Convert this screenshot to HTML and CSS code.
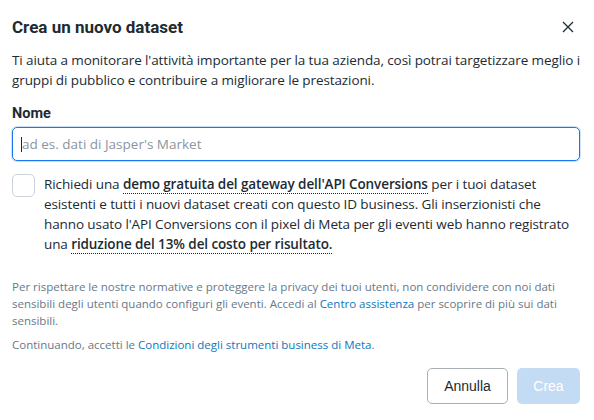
FILE: index.html
```html
<!DOCTYPE html>
<html lang="it">
<head>
<meta charset="utf-8">
<title>Crea un nuovo dataset</title>
<link rel="stylesheet" href="styles.css">
</head>
<body>
<div class="dialog">
  <div class="header">
    <h1 class="title">Crea un nuovo dataset</h1>
    <span class="close" aria-label="Chiudi">
      <svg width="12" height="12" viewBox="0 0 12 12"><path d="M1 1 L11 11 M11 1 L1 11" stroke="#1c2b33" stroke-width="1.3" fill="none"/></svg>
    </span>
  </div>
  <p class="desc">Ti aiuta a monitorare l'attività importante per la tua azienda, così potrai targetizzare meglio i<br>gruppi di pubblico e contribuire a migliorare le prestazioni.</p>
  <label class="label">Nome</label>
  <div class="input"><span class="caret"></span><span class="placeholder">ad es. dati di Jasper's Market</span></div>
  <div class="check-row">
    <span class="checkbox"></span>
    <p class="check-text">Richiedi una <b class="dotted">demo gratuita del gateway dell'API Conversions</b> per i tuoi dataset<br>esistenti e tutti i nuovi dataset creati con questo ID business. Gli inserzionisti che<br>hanno usato l'API Conversions con il pixel di Meta per gli eventi web hanno registrato<br>una <b class="dotted">riduzione del 13% del costo per risultato.</b></p>
  </div>
  <p class="small">Per rispettare le nostre normative e proteggere la privacy dei tuoi utenti, non condividere con noi dati<br>sensibili degli utenti quando configuri gli eventi. Accedi al <a class="link">Centro assistenza</a> per scoprire di più sui dati<br>sensibili.</p>
  <p class="small terms">Continuando, accetti le <a class="link">Condizioni degli strumenti business di Meta</a>.</p>
  <div class="actions">
    <button class="btn cancel">Annulla</button>
    <button class="btn primary">Crea</button>
  </div>
</div>
</body>
</html>
```
FILE: styles.css
```css
html, body { margin: 0; background: #fff; }
body { font-family: "Open Sans", "Noto Sans", sans-serif; color: #1c2b33; }
.dialog { padding: 14px 14px 0 12px; }
.header { display: flex; justify-content: space-between; align-items: center; height: 25px; }
.title { margin: 0; font-family: Roboto, Inter, sans-serif; font-size: 17px; font-weight: 700; color: #1c2b33; }
.close { display: flex; width: 12px; height: 12px; margin-right: 6px; }
.desc { margin: 11px 0 0; font-size: 13.5px; line-height: 20px; letter-spacing: -0.1px; }
.label { display: block; margin-top: 15px; font-family: Roboto, Inter, sans-serif; font-size: 14.5px; font-weight: 700; line-height: 18px; }
.input { margin-top: 4px; height: 32px; border: 1px solid #1877f2; border-radius: 5px; box-shadow: 0 0 0 1px #c9e0f7; display: flex; align-items: center; padding-left: 8px; font-size: 13.5px; }
.caret { width: 1px; height: 15px; background: #1c2b33; }
.placeholder { color: #8a96a0; }
.check-row { display: flex; gap: 9px; margin-top: 13px; }
.checkbox { flex: none; width: 21px; height: 21px; border: 1px solid #cbd2d9; border-radius: 5px; margin-top: 0; }
.check-text { margin: 0; font-size: 13.5px; line-height: 20px; letter-spacing: -0.1px; }
.dotted { font-weight: 600; border-bottom: 1px dotted #1c2b33; }
.small { margin: 24px 0 0; font-size: 11.5px; line-height: 17px; color: #67788a; }
.terms { margin-top: 7px; }
.link { color: #0a78be; }
.actions { display: flex; justify-content: flex-end; gap: 9px; margin-top: 15px; }
.btn { height: 36px; border-radius: 5px; font-family: "Liberation Sans", Arial, sans-serif; font-size: 14px; padding: 0 16px; }
.cancel { background: #fff; border: 1px solid #a8b0b6; color: #1c2b33; width: 81px; }
.primary { background: #c3dcf3; border: none; color: #fff; width: 63px; }
```
